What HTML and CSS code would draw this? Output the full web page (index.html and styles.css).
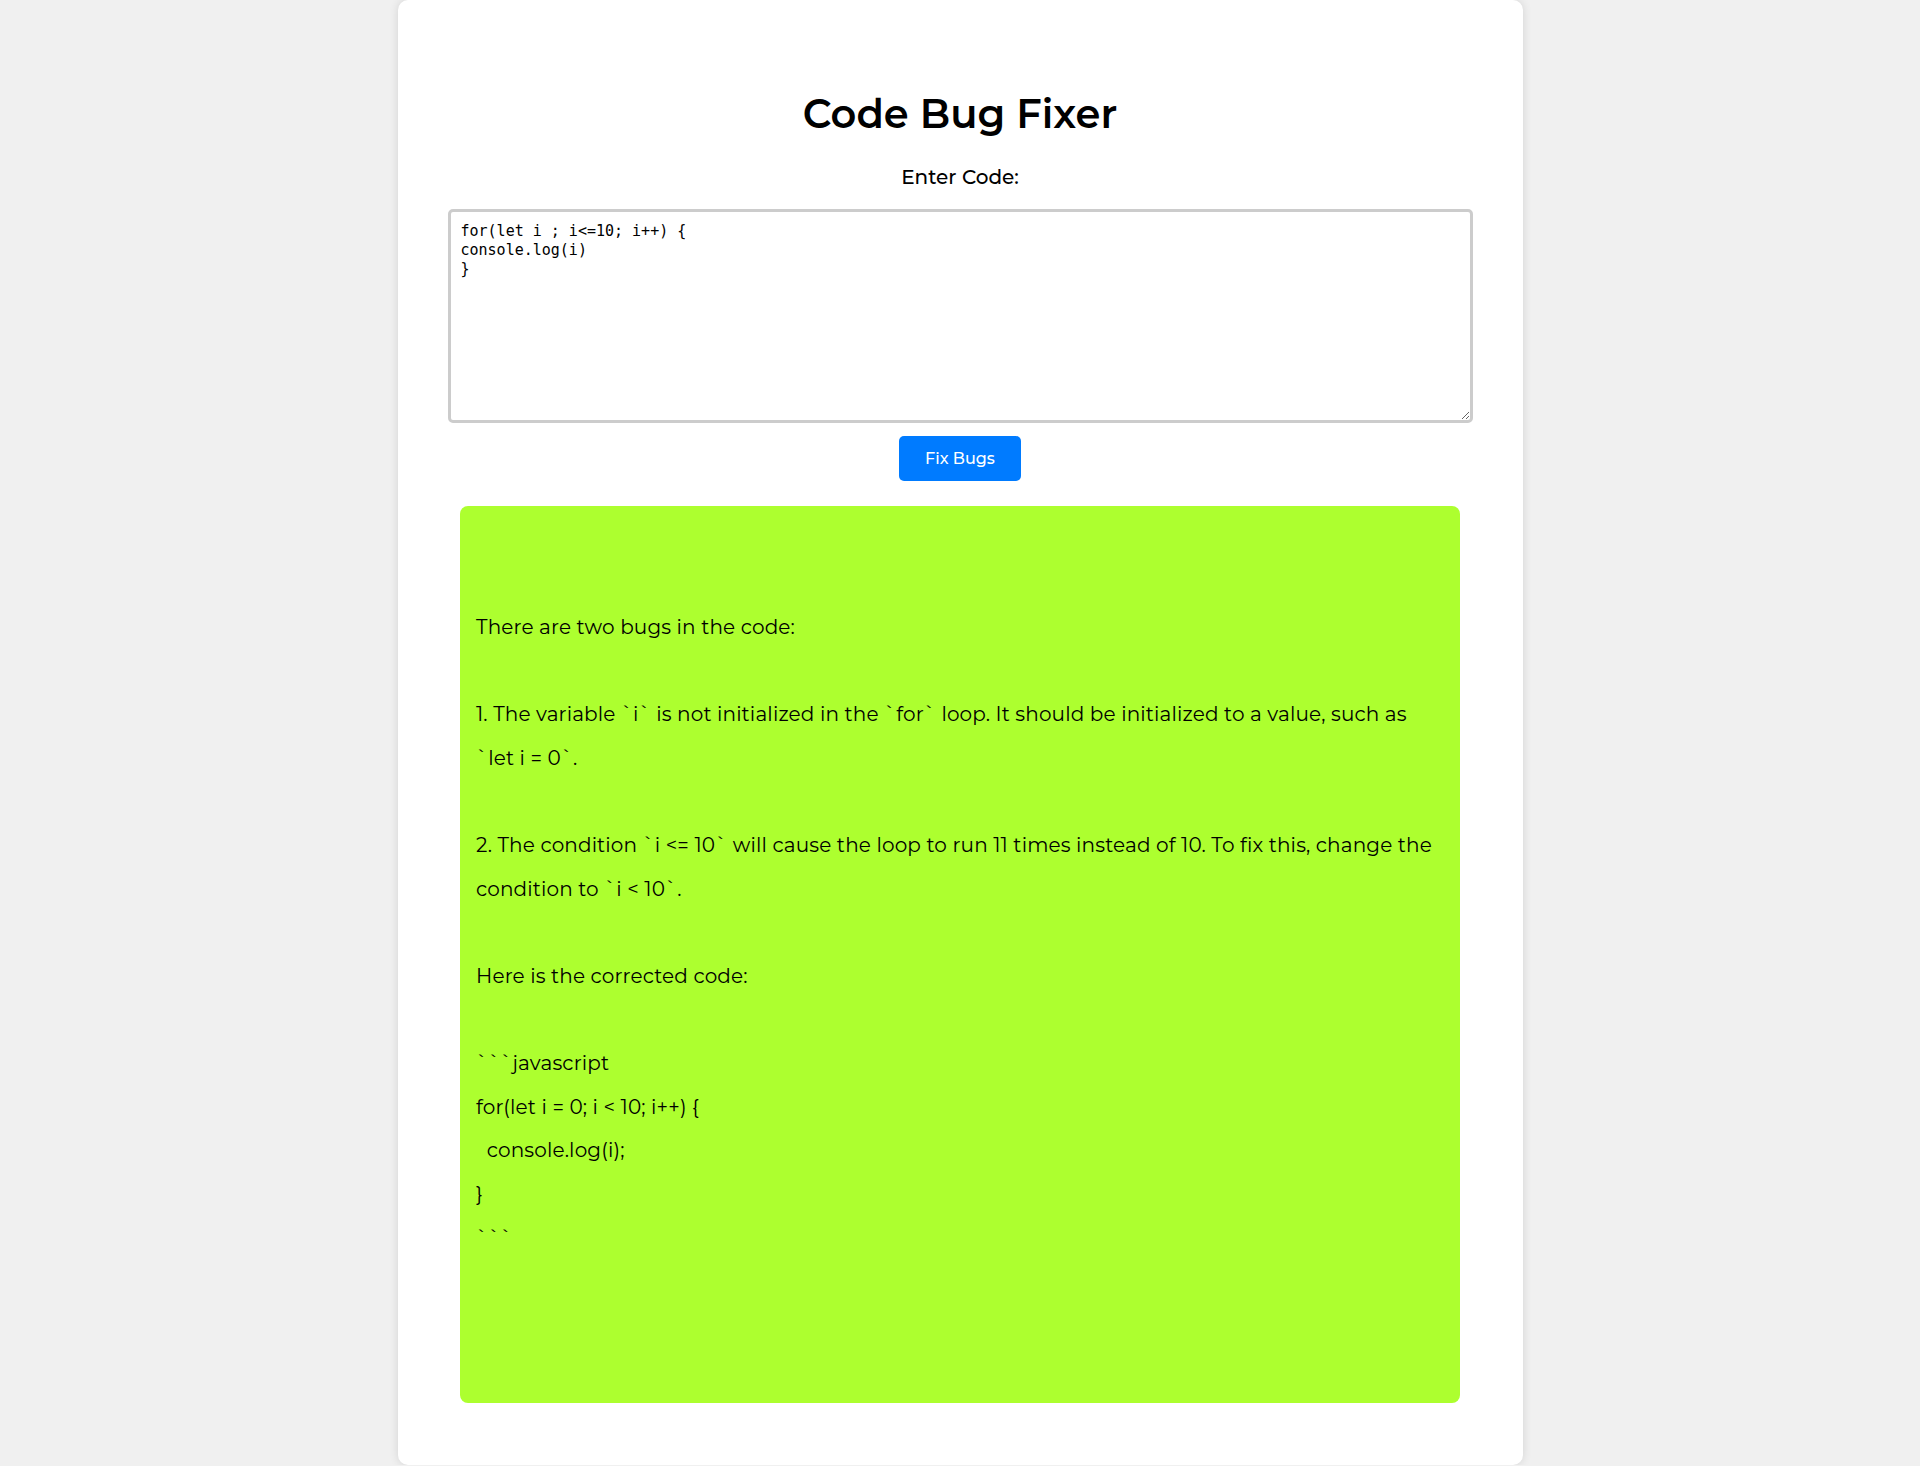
FILE: index.html
```html
<!DOCTYPE html>
<html lang="en">
<head>
<meta charset="utf-8">
<title>Code Bug Fixer</title>
<link rel="stylesheet" href="styles.css">
</head>
<body>
<main class="card">
  <h1 class="title">Code Bug Fixer</h1>
  <label class="label" for="code">Enter Code:</label>
  <textarea id="code" class="code-input" spellcheck="false">for(let i ; i&lt;=10; i++) {
console.log(i)
}</textarea>
  <div class="actions">
    <button class="fix-btn" type="button">Fix Bugs</button>
  </div>
  <div class="output">

There are two bugs in the code:

1. The variable `i` is not initialized in the `for` loop. It should be initialized to a value, such as `let i = 0`.

2. The condition `i &lt;= 10` will cause the loop to run 11 times instead of 10. To fix this, change the condition to `i &lt; 10`.

Here is the corrected code:

```javascript
for(let i = 0; i &lt; 10; i++) {
  console.log(i);
}
```</div>
</main>
</body>
</html>
```

FILE: styles.css
```css
* {
  box-sizing: border-box;
}

body {
  margin: 0;
  background: #f0f0f0;
  font-family: "Montserrat", Inter, "DejaVu Sans", sans-serif;
  color: #000;
}

.card {
  width: 1125px;
  margin: 0 auto;
  background: #fff;
  border-radius: 10px;
  box-shadow: 0 0 10px rgba(0, 0, 0, 0.12);
  padding: 50px 50px 62px;
  display: flex;
  flex-direction: column;
}

.title {
  margin: 40px 0 0;
  font-size: 40px;
  line-height: 48px;
  font-weight: 600;
  text-align: center;
}

.label {
  margin-top: 27px;
  font-size: 20px;
  line-height: 24px;
  font-weight: 500;
  text-align: center;
}

.code-input {
  margin-top: 20px;
  width: 100%;
  height: 214px;
  border: 3px solid #ccc;
  border-radius: 5px;
  padding: 9.5px 10px;
  font-family: "DejaVu Sans Mono", "Liberation Mono", monospace;
  font-size: 15px;
  line-height: 19px;
  color: #000;
  resize: vertical;
}

.actions {
  display: flex;
  justify-content: center;
  margin-top: 13px;
}

.fix-btn {
  background: #007bff;
  color: #fff;
  border: none;
  border-radius: 5px;
  padding: 12px 26px;
  font-family: inherit;
  font-size: 16px;
  line-height: 21px;
  font-weight: 500;
  cursor: pointer;
}

.output {
  width: 1000px;
  margin: 25px auto 0;
  background: #adff2f;
  border-radius: 8px;
  padding: 13px 20px 143px 16px;
  white-space: pre-wrap;
  font-size: 20px;
  line-height: 43.6px;
  letter-spacing: 0.15px;
}
```
